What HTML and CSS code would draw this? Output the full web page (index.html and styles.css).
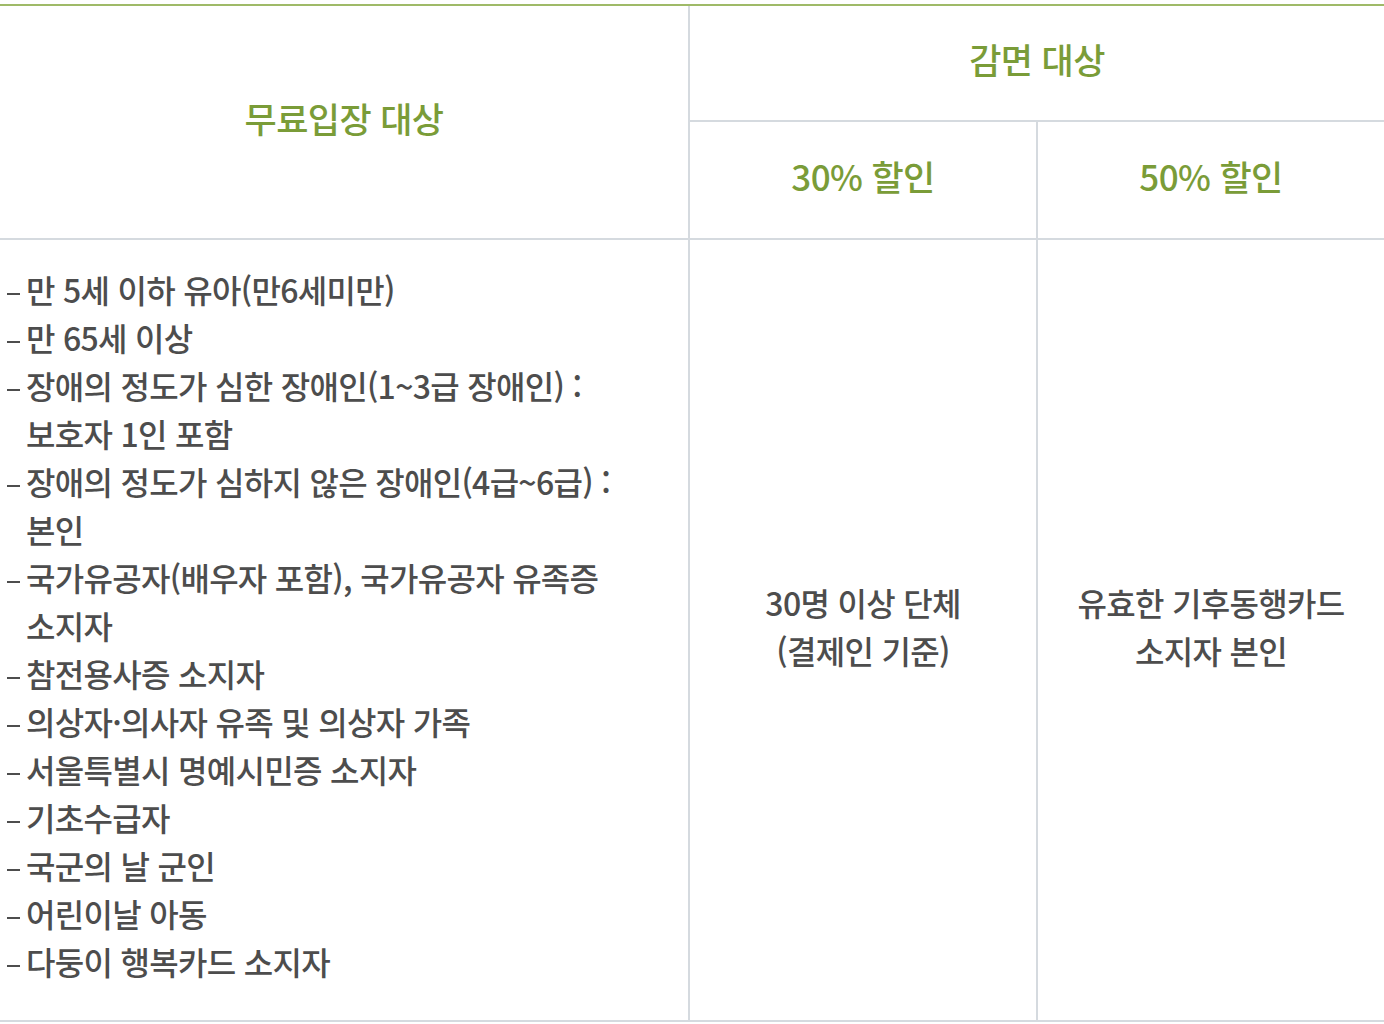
FILE: index.html
```html
<!DOCTYPE html>
<html lang="ko">
<head>
<meta charset="utf-8">
<title>무료입장 및 감면 대상</title>
<link rel="stylesheet" href="styles.css">
</head>
<body>
<div class="page">
  <div class="fee-table" role="table">
    <div class="cell head head-free" role="columnheader">무료입장 대상</div>
    <div class="cell head head-discount" role="columnheader">감면 대상</div>
    <div class="cell head head-sub col-2" role="columnheader">30% 할인</div>
    <div class="cell head head-sub col-3" role="columnheader">50% 할인</div>
    <div class="cell body body-free" role="cell">
      <ul class="free-list">
        <li>만 5세 이하 유아(만6세미만)</li>
        <li>만 65세 이상</li>
        <li>장애의 정도가 심한 장애인(1~3급 장애인) : 보호자 1인 포함</li>
        <li>장애의 정도가 심하지 않은 장애인(4급~6급) : 본인</li>
        <li>국가유공자(배우자 포함), 국가유공자 유족증 소지자</li>
        <li>참전용사증 소지자</li>
        <li>의상자·의사자 유족 및 의상자 가족</li>
        <li>서울특별시 명예시민증 소지자</li>
        <li>기초수급자</li>
        <li>국군의 날 군인</li>
        <li>어린이날 아동</li>
        <li>다둥이 행복카드 소지자</li>
      </ul>
    </div>
    <div class="cell body body-center col-2" role="cell">30명 이상 단체<br>(결제인 기준)</div>
    <div class="cell body body-center col-3" role="cell">유효한 기후동행카드<br>소지자 본인</div>
  </div>
</div>
</body>
</html>
```
FILE: styles.css
```css
* {
  box-sizing: border-box;
}

html, body {
  margin: 0;
  padding: 0;
  background: #ffffff;
}

body {
  font-family: "Noto Sans CJK KR", "Noto Sans", sans-serif;
  color: #4a4a4a;
}

.page {
  padding-top: 4px;
  width: 1384px;
}

.fee-table {
  display: grid;
  grid-template-columns: 688px 348px 348px;
  grid-template-rows: 116px 118px 782px;
  border-top: 2px solid #9fba68;
}

.cell {
  border-bottom: 2px solid #d5dadf;
  display: flex;
  align-items: center;
  justify-content: center;
  text-align: center;
}

.head {
  color: #7a9c38;
  font-size: 35px;
  font-weight: 500;
  letter-spacing: -0.6px;
  padding-bottom: 10px;
}

.head-free {
  grid-column: 1;
  grid-row: 1 / span 2;
}

.head-discount {
  grid-column: 2 / span 2;
  grid-row: 1;
  border-left: 2px solid #d5dadf;
}

.col-2 {
  grid-column: 2;
  border-left: 2px solid #d5dadf;
}

.col-3 {
  grid-column: 3;
  border-left: 2px solid #d5dadf;
}

.head-sub {
  grid-row: 2;
}

.body {
  grid-row: 3;
  font-size: 32px;
  font-weight: 500;
  line-height: 48px;
  letter-spacing: -0.7px;
  color: #4d4d4d;
  word-break: keep-all;
}

.body-free {
  grid-column: 1;
  justify-content: flex-start;
  align-items: flex-start;
  text-align: left;
  padding: 25px 38px 0 7px;
}

.body-center {
  padding-bottom: 8px;
}

.free-list {
  list-style: none;
  margin: 0;
  padding: 0;
}

.free-list li {
  padding-left: 19px;
  text-indent: -19px;
}

.free-list li::before {
  content: "";
  display: inline-block;
  width: 13px;
  height: 2px;
  margin-right: 6px;
  background: #4d4d4d;
  vertical-align: middle;
}
```
